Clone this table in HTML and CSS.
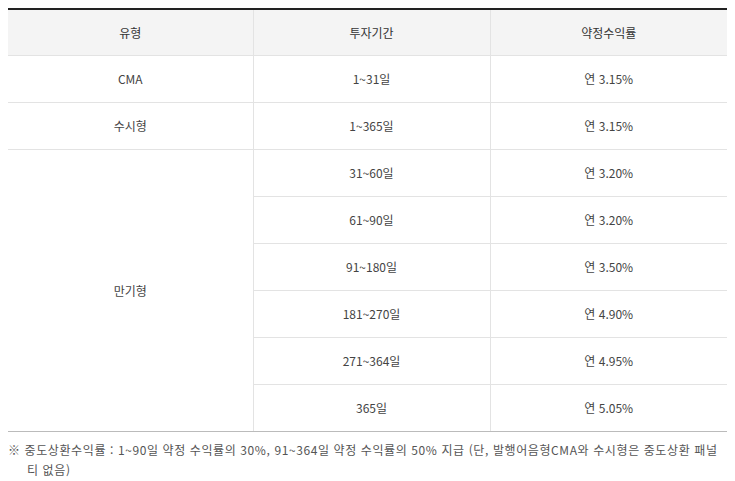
FILE: index.html
```html
<!DOCTYPE html>
<html lang="ko">
<head>
<meta charset="utf-8">
<link rel="stylesheet" href="styles.css">
</head>
<body>
<table class="rate-table">
  <colgroup>
    <col class="c1"><col class="c2"><col class="c3">
  </colgroup>
  <thead>
    <tr><th>유형</th><th>투자기간</th><th>약정수익률</th></tr>
  </thead>
  <tbody>
    <tr><td>CMA</td><td>1~31일</td><td>연 3.15%</td></tr>
    <tr><td>수시형</td><td>1~365일</td><td>연 3.15%</td></tr>
    <tr><td rowspan="6">만기형</td><td>31~60일</td><td>연 3.20%</td></tr>
    <tr><td>61~90일</td><td>연 3.20%</td></tr>
    <tr><td>91~180일</td><td>연 3.50%</td></tr>
    <tr><td>181~270일</td><td>연 4.90%</td></tr>
    <tr><td>271~364일</td><td>연 4.95%</td></tr>
    <tr class="last"><td>365일</td><td>연 5.05%</td></tr>
  </tbody>
</table>
<p class="note">※ 중도상환수익률 : 1~90일 약정 수익률의 30%, 91~364일 약정 수익률의 50% 지급 (단, 발행어음형CMA와 수시형은 중도상환 패널티 없음)</p>
</body>
</html>
```
FILE: styles.css
```css
body {
  margin: 8px;
  font-family: "Noto Sans CJK KR", "Noto Sans", sans-serif;
  font-size: 12px;
  color: #444;
  background: #fff;
}
.rate-table {
  width: 719px;
  border-collapse: collapse;
  table-layout: fixed;
  border-top: 2px solid #222;
}
.c1 { width: 245px; }
.c2 { width: 237px; }
.c3 { width: 237px; }
.rate-table th,
.rate-table td {
  height: 46px;
  padding: 0;
  text-align: center;
  vertical-align: middle;
  border-bottom: 1px solid #e3e3e3;
  border-left: 1px solid #e3e3e3;
  font-weight: normal;
  line-height: 16px;
}
.rate-table th {
  height: 45px;
  background: #f4f4f4;
  color: #333;
}
.rate-table th:first-child,
.rate-table tbody tr:nth-child(-n+3) td:first-child {
  border-left: none;
}
.rate-table tr.last td {
  border-bottom: 1px solid #bbb;
}
.rate-table td[rowspan] {
  border-bottom: 1px solid #bbb;
}
.note {
  width: 719px;
  margin: 8px 0 0;
  padding-left: 19px;
  text-indent: -19px;
  line-height: 20px;
  letter-spacing: 0.6px;
  color: #555;
  box-sizing: border-box;
}
```
